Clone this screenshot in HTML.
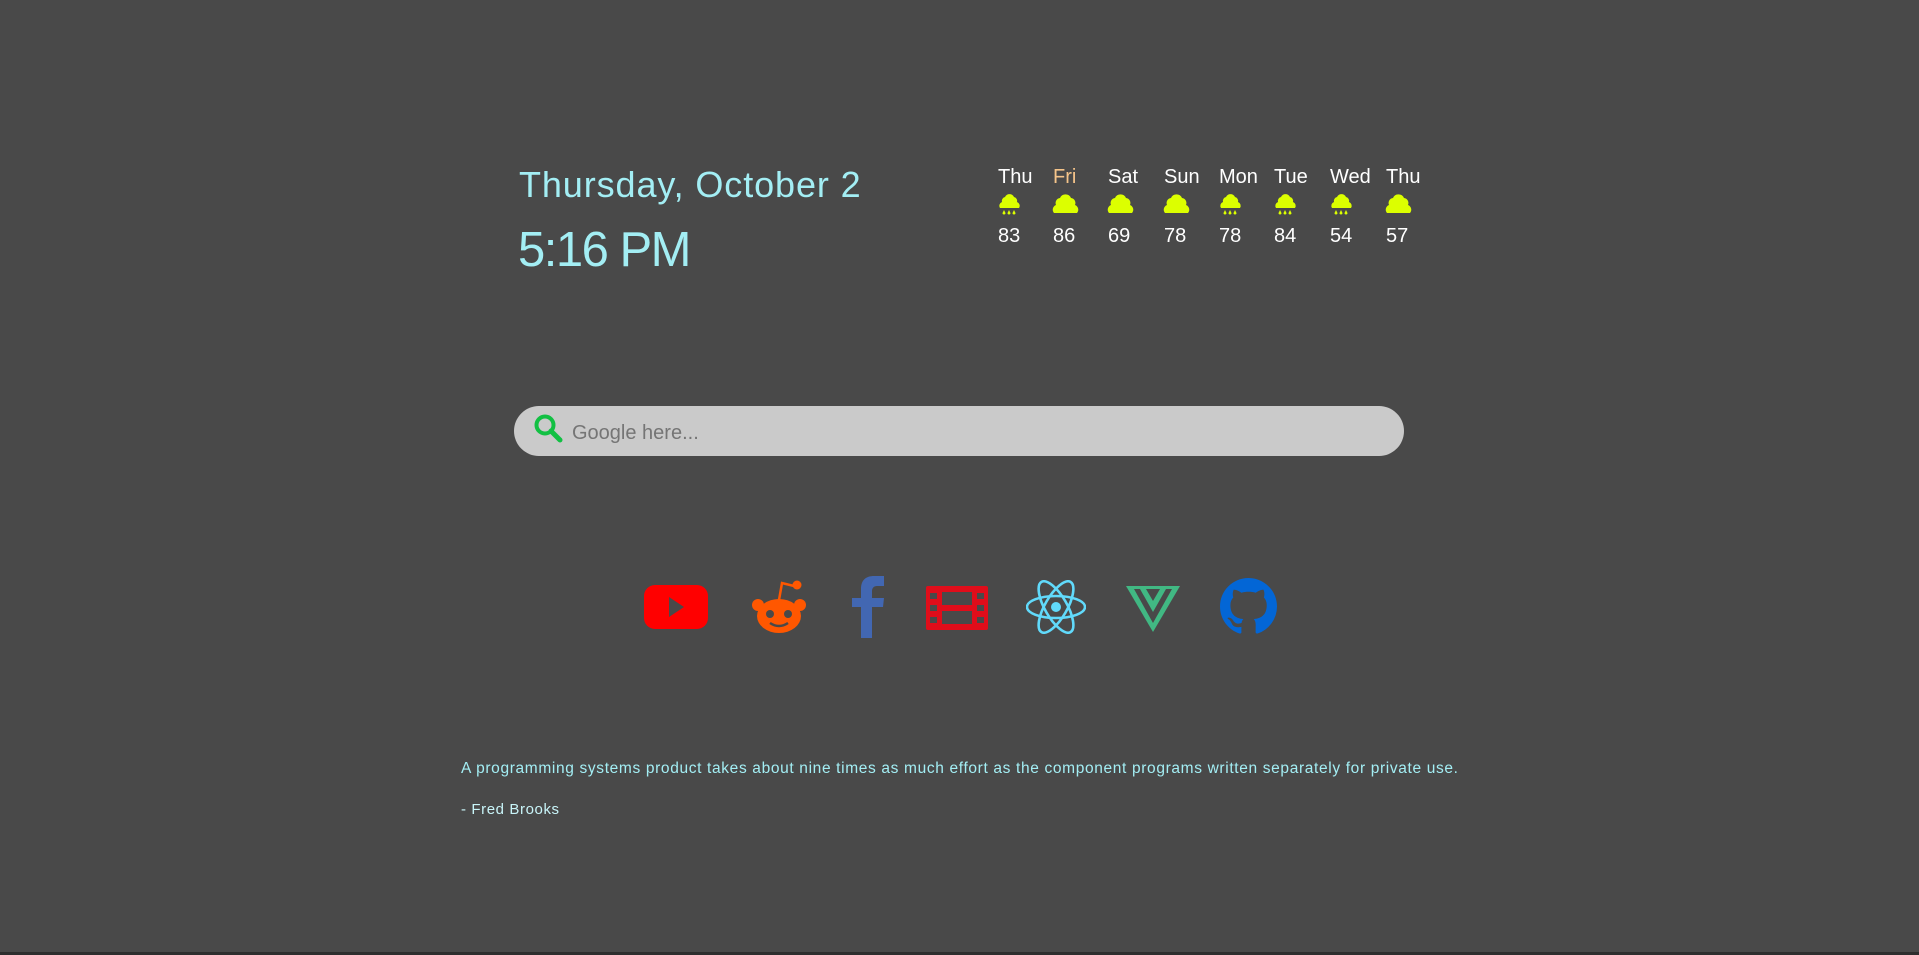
<!DOCTYPE html>
<html><head><meta charset="utf-8">
<style>
html,body{margin:0;padding:0;}
body{width:1919px;height:955px;background:#494949;position:relative;overflow:hidden;font-family:"Liberation Sans",sans-serif;}
.abs{position:absolute;}
.date{left:519px;top:164px;font-size:36px;color:#a3eef4;white-space:nowrap;letter-spacing:0.9px;}
.time{left:518px;top:222px;font-size:49px;color:#a3eef4;white-space:nowrap;letter-spacing:-1.5px;}
.col{position:absolute;top:166px;width:50px;text-align:left;color:#fff;}
.col .d{font-size:20px;height:25px;}
.col svg{display:block;margin-left:-1px;}
.col .t{font-size:20px;margin-top:8px;}
.search{left:514px;top:406px;width:890px;height:50px;border-radius:25px;background:#cacaca;}
.ph{left:572px;top:422px;font-size:20px;color:#757575;}
.quote{left:461px;top:760px;font-size:15.5px;color:#a3eef4;white-space:nowrap;letter-spacing:0.65px;}
.author{left:461px;top:801px;font-size:15px;color:#c8f4f8;letter-spacing:0.6px;}
</style></head><body>
<div class="abs date">Thursday, October 2</div>
<div class="abs time">5:16 PM</div>

<div class="col" style="left:998px"><div class="d">Thu</div><svg width="26" height="26" viewBox="0 0 26 26"><path d="M3 17a4 4 0 0 1 2-6 4 4 0 0 1 3-5 5 5 0 0 1 9 0 4 4 0 0 1 3 5 4 4 0 0 1 2 6z" fill="#dcff00"/><path d="M7 19l-1.5 3a1.5 1.5 0 0 0 3 0zM12 19l-1.5 3a1.5 1.5 0 0 0 3 0zM17 19l-1.5 3a1.5 1.5 0 0 0 3 0z" fill="#dcff00"/></svg><div class="t">83</div></div>
<div class="col" style="left:1053px"><div class="d" style="color:#f5c48a">Fri</div><svg width="28" height="26" viewBox="0 0 28 26"><path d="M2 22a5 5 0 0 1 2-8 5 5 0 0 1 4-7 6 6 0 0 1 11 0 5 5 0 0 1 4 7 5 5 0 0 1 2 8z" fill="#dcff00"/></svg><div class="t">86</div></div>
<div class="col" style="left:1108px"><div class="d">Sat</div><svg width="28" height="26" viewBox="0 0 28 26"><path d="M2 22a5 5 0 0 1 2-8 5 5 0 0 1 4-7 6 6 0 0 1 11 0 5 5 0 0 1 4 7 5 5 0 0 1 2 8z" fill="#dcff00"/></svg><div class="t">69</div></div>
<div class="col" style="left:1164px"><div class="d">Sun</div><svg width="28" height="26" viewBox="0 0 28 26"><path d="M2 22a5 5 0 0 1 2-8 5 5 0 0 1 4-7 6 6 0 0 1 11 0 5 5 0 0 1 4 7 5 5 0 0 1 2 8z" fill="#dcff00"/></svg><div class="t">78</div></div>
<div class="col" style="left:1219px"><div class="d">Mon</div><svg width="26" height="26" viewBox="0 0 26 26"><path d="M3 17a4 4 0 0 1 2-6 4 4 0 0 1 3-5 5 5 0 0 1 9 0 4 4 0 0 1 3 5 4 4 0 0 1 2 6z" fill="#dcff00"/><path d="M7 19l-1.5 3a1.5 1.5 0 0 0 3 0zM12 19l-1.5 3a1.5 1.5 0 0 0 3 0zM17 19l-1.5 3a1.5 1.5 0 0 0 3 0z" fill="#dcff00"/></svg><div class="t">78</div></div>
<div class="col" style="left:1274px"><div class="d">Tue</div><svg width="26" height="26" viewBox="0 0 26 26"><path d="M3 17a4 4 0 0 1 2-6 4 4 0 0 1 3-5 5 5 0 0 1 9 0 4 4 0 0 1 3 5 4 4 0 0 1 2 6z" fill="#dcff00"/><path d="M7 19l-1.5 3a1.5 1.5 0 0 0 3 0zM12 19l-1.5 3a1.5 1.5 0 0 0 3 0zM17 19l-1.5 3a1.5 1.5 0 0 0 3 0z" fill="#dcff00"/></svg><div class="t">84</div></div>
<div class="col" style="left:1330px"><div class="d">Wed</div><svg width="26" height="26" viewBox="0 0 26 26"><path d="M3 17a4 4 0 0 1 2-6 4 4 0 0 1 3-5 5 5 0 0 1 9 0 4 4 0 0 1 3 5 4 4 0 0 1 2 6z" fill="#dcff00"/><path d="M7 19l-1.5 3a1.5 1.5 0 0 0 3 0zM12 19l-1.5 3a1.5 1.5 0 0 0 3 0zM17 19l-1.5 3a1.5 1.5 0 0 0 3 0z" fill="#dcff00"/></svg><div class="t">54</div></div>
<div class="col" style="left:1386px"><div class="d">Thu</div><svg width="28" height="26" viewBox="0 0 28 26"><path d="M2 22a5 5 0 0 1 2-8 5 5 0 0 1 4-7 6 6 0 0 1 11 0 5 5 0 0 1 4 7 5 5 0 0 1 2 8z" fill="#dcff00"/></svg><div class="t">57</div></div>

<div class="abs search"></div>
<svg class="abs" style="left:533px;top:413px" width="32" height="32" viewBox="0 0 32 32"><circle cx="12" cy="12" r="8.5" fill="none" stroke="#12c043" stroke-width="4"/><path d="M18 18l9 9" stroke="#12c043" stroke-width="5" stroke-linecap="round"/></svg>
<div class="abs ph">Google here...</div>

<svg class="abs" style="left:644px;top:585px" width="64" height="44" viewBox="0 0 64 44"><rect x="0" y="0" width="64" height="44" rx="11" fill="#ff0000"/><path d="M25 12l15 10-15 10z" fill="#494949"/></svg>
<svg class="abs" style="left:750px;top:578px" width="58" height="56" viewBox="0 0 58 56"><ellipse cx="29" cy="38" rx="22" ry="17" fill="#ff5700"/><circle cx="8" cy="27" r="6" fill="#ff5700"/><circle cx="50" cy="27" r="6" fill="#ff5700"/><path d="M29 22l3-17 12 3" stroke="#ff5700" stroke-width="2.5" fill="none"/><circle cx="47" cy="7" r="4.5" fill="#ff5700"/><circle cx="20" cy="36" r="4" fill="#494949"/><circle cx="38" cy="36" r="4" fill="#494949"/><path d="M20 45q9 6 18 0" stroke="#494949" stroke-width="2.5" fill="none"/></svg>
<svg class="abs" style="left:851px;top:576px" width="34" height="62" viewBox="0 0 34 62"><path d="M10 62V31H1V22h9v-9C10 4 15 0 23 0h10v10h-7c-3 0-5 2-5 5v7h12l-1 9H21v31z" fill="#4267b2"/></svg>
<svg class="abs" style="left:926px;top:586px" width="62" height="44" viewBox="0 0 62 44"><rect x="0" y="0" width="62" height="44" rx="2" fill="#e00d1a"/><rect x="16" y="6" width="30" height="13" fill="#494949"/><rect x="16" y="25" width="30" height="13" fill="#494949"/><rect x="4" y="7" width="7" height="6" fill="#494949"/><rect x="4" y="19" width="7" height="6" fill="#494949"/><rect x="4" y="31" width="7" height="6" fill="#494949"/><rect x="51" y="7" width="7" height="6" fill="#494949"/><rect x="51" y="19" width="7" height="6" fill="#494949"/><rect x="51" y="31" width="7" height="6" fill="#494949"/></svg>
<svg class="abs" style="left:1026px;top:580px" width="60" height="54" viewBox="-30 -27 60 54"><g fill="none" stroke="#61dafb" stroke-width="2.6"><ellipse rx="29" ry="11"/><ellipse rx="29" ry="11" transform="rotate(60)"/><ellipse rx="29" ry="11" transform="rotate(120)"/></g><circle r="5" fill="#61dafb"/></svg>
<svg class="abs" style="left:1126px;top:586px" width="54" height="46" viewBox="0 0 54 46"><path d="M0 0h54L27 46z" fill="#41b883"/><path d="M8 3h38L27 37z" fill="#494949"/><path d="M14 3h26L27 26z" fill="#41b883"/><path d="M20 3h14L27 15z" fill="#494949"/></svg>
<svg class="abs" style="left:1219px;top:578px" width="59" height="57" viewBox="0 0 16 16"><path fill="#0366d6" d="M8 0C3.58 0 0 3.58 0 8c0 3.54 2.29 6.53 5.47 7.59.4.07.55-.17.55-.38 0-.19-.01-.82-.01-1.49-2.01.37-2.53-.49-2.69-.94-.09-.23-.48-.94-.82-1.13-.28-.15-.68-.52-.01-.53.63-.01 1.08.58 1.23.82.72 1.21 1.87.87 2.33.66.07-.52.28-.87.51-1.07-1.78-.2-3.64-.89-3.64-3.95 0-.87.31-1.59.82-2.15-.08-.2-.36-1.02.08-2.12 0 0 .67-.21 2.2.82.64-.18 1.32-.27 2-.27.68 0 1.36.09 2 .27 1.530-1.04 2.2-.82 2.2-.82.44 1.1.16 1.92.08 2.12.51.56.82 1.27.82 2.15 0 3.07-1.87 3.75-3.65 3.95.29.25.54.73.54 1.48 0 1.07-.01 1.93-.01 2.2 0 .21.15.46.55.38A8.013 8.013 0 0016 8c0-4.42-3.58-8-8-8z"/></svg>

<div class="abs quote">A programming systems product takes about nine times as much effort as the component programs written separately for private use.</div>
<div class="abs author">- Fred Brooks</div>
<div class="abs" style="left:0;top:952px;width:1919px;height:3px;background:#2e2e2e"></div>
</body></html>
